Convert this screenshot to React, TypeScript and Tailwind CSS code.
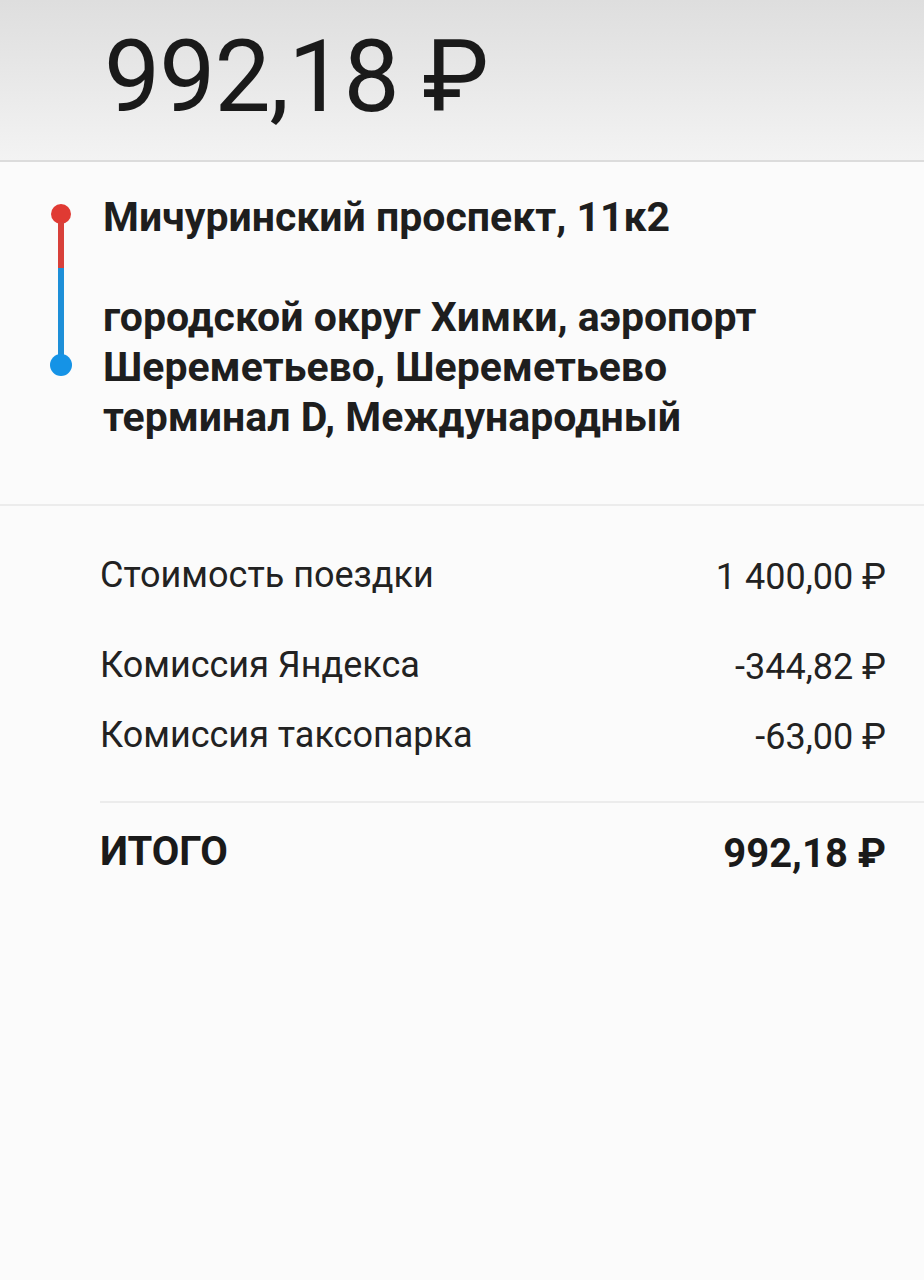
export default function App() {
  const rows = [
    { label: "Стоимость поездки", value: "1 400,00 ₽", cls: "h-[90px]" },
    { label: "Комиссия Яндекса", value: "-344,82 ₽", cls: "h-[70px]" },
    { label: "Комиссия таксопарка", value: "-63,00 ₽", cls: "h-[70px]" },
  ];

  return (
    <div
      className="min-h-[1280px] w-[924px] bg-[#fbfbfb] text-[#1f1f1f]"
      style={{ fontFamily: "Roboto, 'Noto Sans', sans-serif" }}
    >
      {/* header with total */}
      <div className="h-[162px] border-b-2 border-[#dcdcdc] bg-gradient-to-b from-[#dedede] to-[#f3f3f3] pl-[104px] pt-[22px]">
        <div className="text-[100px] leading-[110px] tracking-[-1px] text-[#1a1a1a]">992,18 ₽</div>
      </div>

      {/* route */}
      <div className="flex border-b-2 border-[#ececec] pb-[62px] pt-[30px]">
        <div className="w-[103px] shrink-0 pl-[50px] pt-[12px]">
          <div className="flex w-[22px] flex-col items-center">
            <div className="h-[20px] w-[20px] rounded-full bg-[#e03a33]" />
            <div className="mt-[-2px] h-[46px] w-[6px] bg-[#d8403a]" />
            <div className="h-[88px] w-[6px] bg-[#1d8fd8]" />
            <div className="mt-[-2px] h-[22px] w-[22px] rounded-full bg-[#1593e6]" />
          </div>
        </div>
        <div className="w-[690px] text-[41px] font-bold leading-[50px] text-[#1e1e1e]">
          <div>Мичуринский проспект, 11к2</div>
          <div className="mt-[50px]">
            городской округ Химки, аэропорт Шереметьево, Шереметьево терминал D, Международный
          </div>
        </div>
      </div>

      {/* breakdown */}
      <div className="pl-[100px] pt-[39px]">
        <div className="pr-[38px]">
          {rows.map((r) => (
            <div key={r.label} className={`flex items-start justify-between ${r.cls}`}>
              <span className="text-[36px] leading-[60px] text-[#222]">{r.label}</span>
              <span className="text-[36px] leading-[64px] text-[#222]">{r.value}</span>
            </div>
          ))}
        </div>
        <div className="mt-[26px] border-t-2 border-[#ececec]" />
        <div className="flex justify-between pr-[38px] pt-[19px]">
          <span className="text-[40px] font-bold leading-[60px] text-[#1a1a1a]">ИТОГО</span>
          <span className="text-[40px] font-bold leading-[64px] text-[#1a1a1a]">992,18 ₽</span>
        </div>
      </div>
    </div>
  );
}
